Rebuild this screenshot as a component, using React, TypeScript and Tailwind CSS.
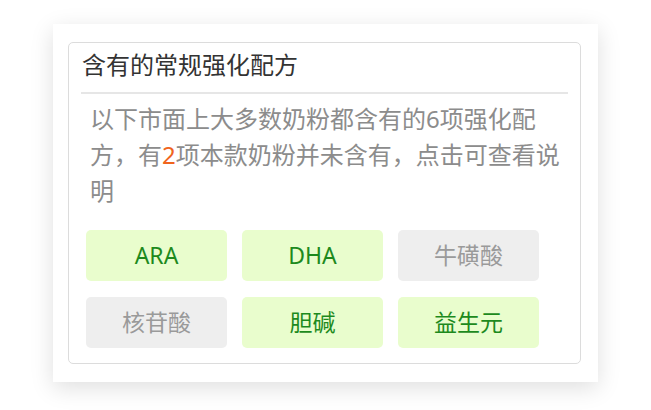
import React from 'react';

interface Formula {
    name: string;
    has: boolean;
}

const formulas: Formula[] = [
    { name: 'ARA', has: true },
    { name: 'DHA', has: true },
    { name: '牛磺酸', has: false },
    { name: '核苷酸', has: false },
    { name: '胆碱', has: true },
    { name: '益生元', has: true },
];

const App = () => {
    return (
        <div className="min-h-[410px] w-full bg-white pt-[24px] font-['Noto_Sans','Noto_Sans_CJK_SC',sans-serif]">
            <div className="mx-auto w-[545px] bg-white pl-[15px] pt-[18px] pb-[18px] shadow-[0_6px_22px_rgba(0,0,0,0.13)]">
                <div className="w-[513px] rounded-[5px] border border-[#dcdcdc] bg-white">
                    {/* header */}
                    <div className="mx-[12px] border-b-2 border-[#e6e6e6] pt-[5px] pb-[10px]">
                        <h2 className="pl-px text-[24px] leading-[34px] font-normal text-[#333]">含有的常规强化配方</h2>
                    </div>

                    {/* description */}
                    <p className="pl-[21px] pr-[20px] pt-[7px] text-[24px] leading-[36px] text-[#8c8c8c]">
                        以下市面上大多数奶粉都含有的6项强化配方，有<span className="text-[#f0641e]">2</span>项本款奶粉并未含有，点击可查看说明
                    </p>

                    {/* formula tags */}
                    <div className="mt-[21px] grid w-fit grid-cols-3 gap-x-[15px] gap-y-[16px] pl-[17px] pb-[15px]">
                        {formulas.map((item) => (
                            <button
                                key={item.name}
                                className={
                                    item.has
                                        ? 'flex h-[51px] w-[141px] items-center justify-center rounded-[5px] bg-[#e9fdcd] text-[23px] text-[#1d8a1d]'
                                        : 'flex h-[51px] w-[141px] items-center justify-center rounded-[5px] bg-[#eeeeee] text-[23px] text-[#9a9a9a]'
                                }
                            >
                                {item.name}
                            </button>
                        ))}
                    </div>
                </div>
            </div>
        </div>
    );
};

export default App;
